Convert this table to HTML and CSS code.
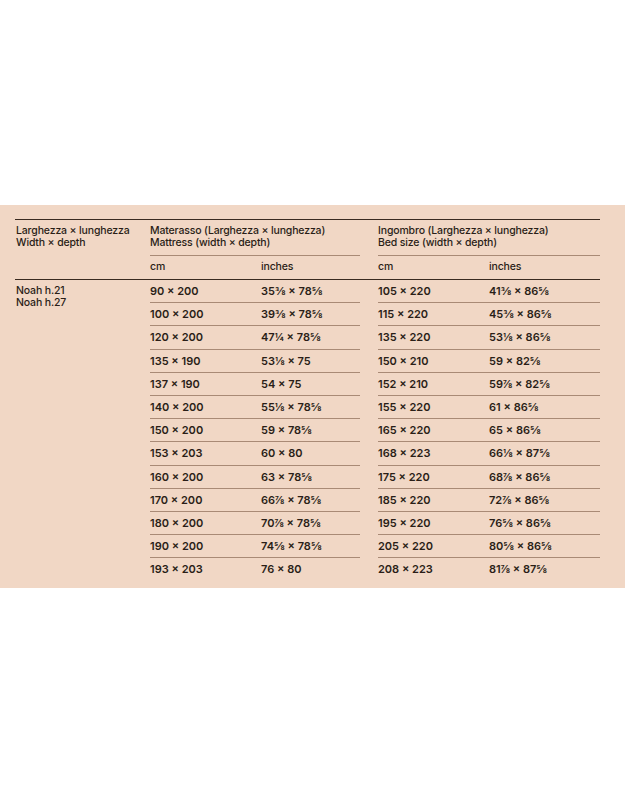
FILE: index.html
```html
<!DOCTYPE html>
<html lang="it">
<head>
    <meta charset="UTF-8">
    <meta name="viewport" content="width=device-width, initial-scale=1.0">
    <title>Noah - Misure</title>
    <link rel="stylesheet" href="styles.css">
</head>
<body>

    <section class="band">
        <div class="sizes">
            <!-- intestazione -->
            <div class="head">
                <div class="lbl">Larghezza × lunghezza<br>Width × depth</div>
                <div class="grp">
                    <div class="grp-title">Materasso (Larghezza × lunghezza)<br>Mattress (width × depth)</div>
                    <div class="units"><span>cm</span><span>inches</span></div>
                </div>
                <div class="grp grp-wide">
                    <div class="grp-title">Ingombro (Larghezza × lunghezza)<br>Bed size (width × depth)</div>
                    <div class="units"><span>cm</span><span>inches</span></div>
                </div>
            </div>

            <!-- misure -->
            <div class="body">
                <div class="lbl">Noah h.21<br>Noah h.27</div>
                <div class="grp">
                    <div class="row"><span>90 × 200</span><span>35⅜ × 78⅝</span></div>
                    <div class="row"><span>100 × 200</span><span>39⅜ × 78⅝</span></div>
                    <div class="row"><span>120 × 200</span><span>47¼ × 78⅝</span></div>
                    <div class="row"><span>135 × 190</span><span>53⅛ × 75</span></div>
                    <div class="row"><span>137 × 190</span><span>54 × 75</span></div>
                    <div class="row"><span>140 × 200</span><span>55⅛ × 78⅝</span></div>
                    <div class="row"><span>150 × 200</span><span>59 × 78⅝</span></div>
                    <div class="row"><span>153 × 203</span><span>60 × 80</span></div>
                    <div class="row"><span>160 × 200</span><span>63 × 78⅝</span></div>
                    <div class="row"><span>170 × 200</span><span>66⅞ × 78⅝</span></div>
                    <div class="row"><span>180 × 200</span><span>70⅞ × 78⅝</span></div>
                    <div class="row"><span>190 × 200</span><span>74⅝ × 78⅝</span></div>
                    <div class="row"><span>193 × 203</span><span>76 × 80</span></div>
                </div>
                <div class="grp grp-wide">
                    <div class="row"><span>105 × 220</span><span>41⅜ × 86⅝</span></div>
                    <div class="row"><span>115 × 220</span><span>45⅜ × 86⅝</span></div>
                    <div class="row"><span>135 × 220</span><span>53⅛ × 86⅝</span></div>
                    <div class="row"><span>150 × 210</span><span>59 × 82⅝</span></div>
                    <div class="row"><span>152 × 210</span><span>59⅞ × 82⅝</span></div>
                    <div class="row"><span>155 × 220</span><span>61 × 86⅝</span></div>
                    <div class="row"><span>165 × 220</span><span>65 × 86⅝</span></div>
                    <div class="row"><span>168 × 223</span><span>66⅛ × 87⅝</span></div>
                    <div class="row"><span>175 × 220</span><span>68⅞ × 86⅝</span></div>
                    <div class="row"><span>185 × 220</span><span>72⅞ × 86⅝</span></div>
                    <div class="row"><span>195 × 220</span><span>76⅝ × 86⅝</span></div>
                    <div class="row"><span>205 × 220</span><span>80⅝ × 86⅝</span></div>
                    <div class="row"><span>208 × 223</span><span>81⅞ × 87⅝</span></div>
                </div>
            </div>
        </div>
    </section>

</body>
</html>
```

FILE: styles.css
```css
body {
    margin: 0;
    background-color: #fff;
    font-family: Inter, "Liberation Sans", sans-serif;
    color: #2a1e17;
}

.band {
    margin-top: 205px;
    background-color: #f1d7c5;
    padding: 14px 25px 8px 15px;
}

.sizes {
    border-top: 1.5px solid #3a2a20;
    font-size: 10.5px;
    line-height: 12px;
}

.head,
.body {
    display: flex;
}

.head {
    border-bottom: 1.5px solid #3a2a20;
    font-weight: 500;
    letter-spacing: -0.15px;
}

.lbl {
    width: 134px;
    padding: 5px 0 0 1px;
    font-weight: 500;
    letter-spacing: -0.15px;
}

.grp {
    width: 210px;
}

.grp-wide {
    width: 222px;
    margin-left: 18px;
}

.grp-title {
    padding: 5px 0 6px;
    border-bottom: 1px solid #a98a76;
}

.units,
.row {
    display: grid;
    grid-template-columns: 111px 1fr;
}

.units {
    padding: 5px 0 6px;
}

.row {
    padding: 5px 0 5.2px;
    font-size: 11px;
    font-weight: 600;
}

.row + .row {
    border-top: 1px solid #a98a76;
}
```
